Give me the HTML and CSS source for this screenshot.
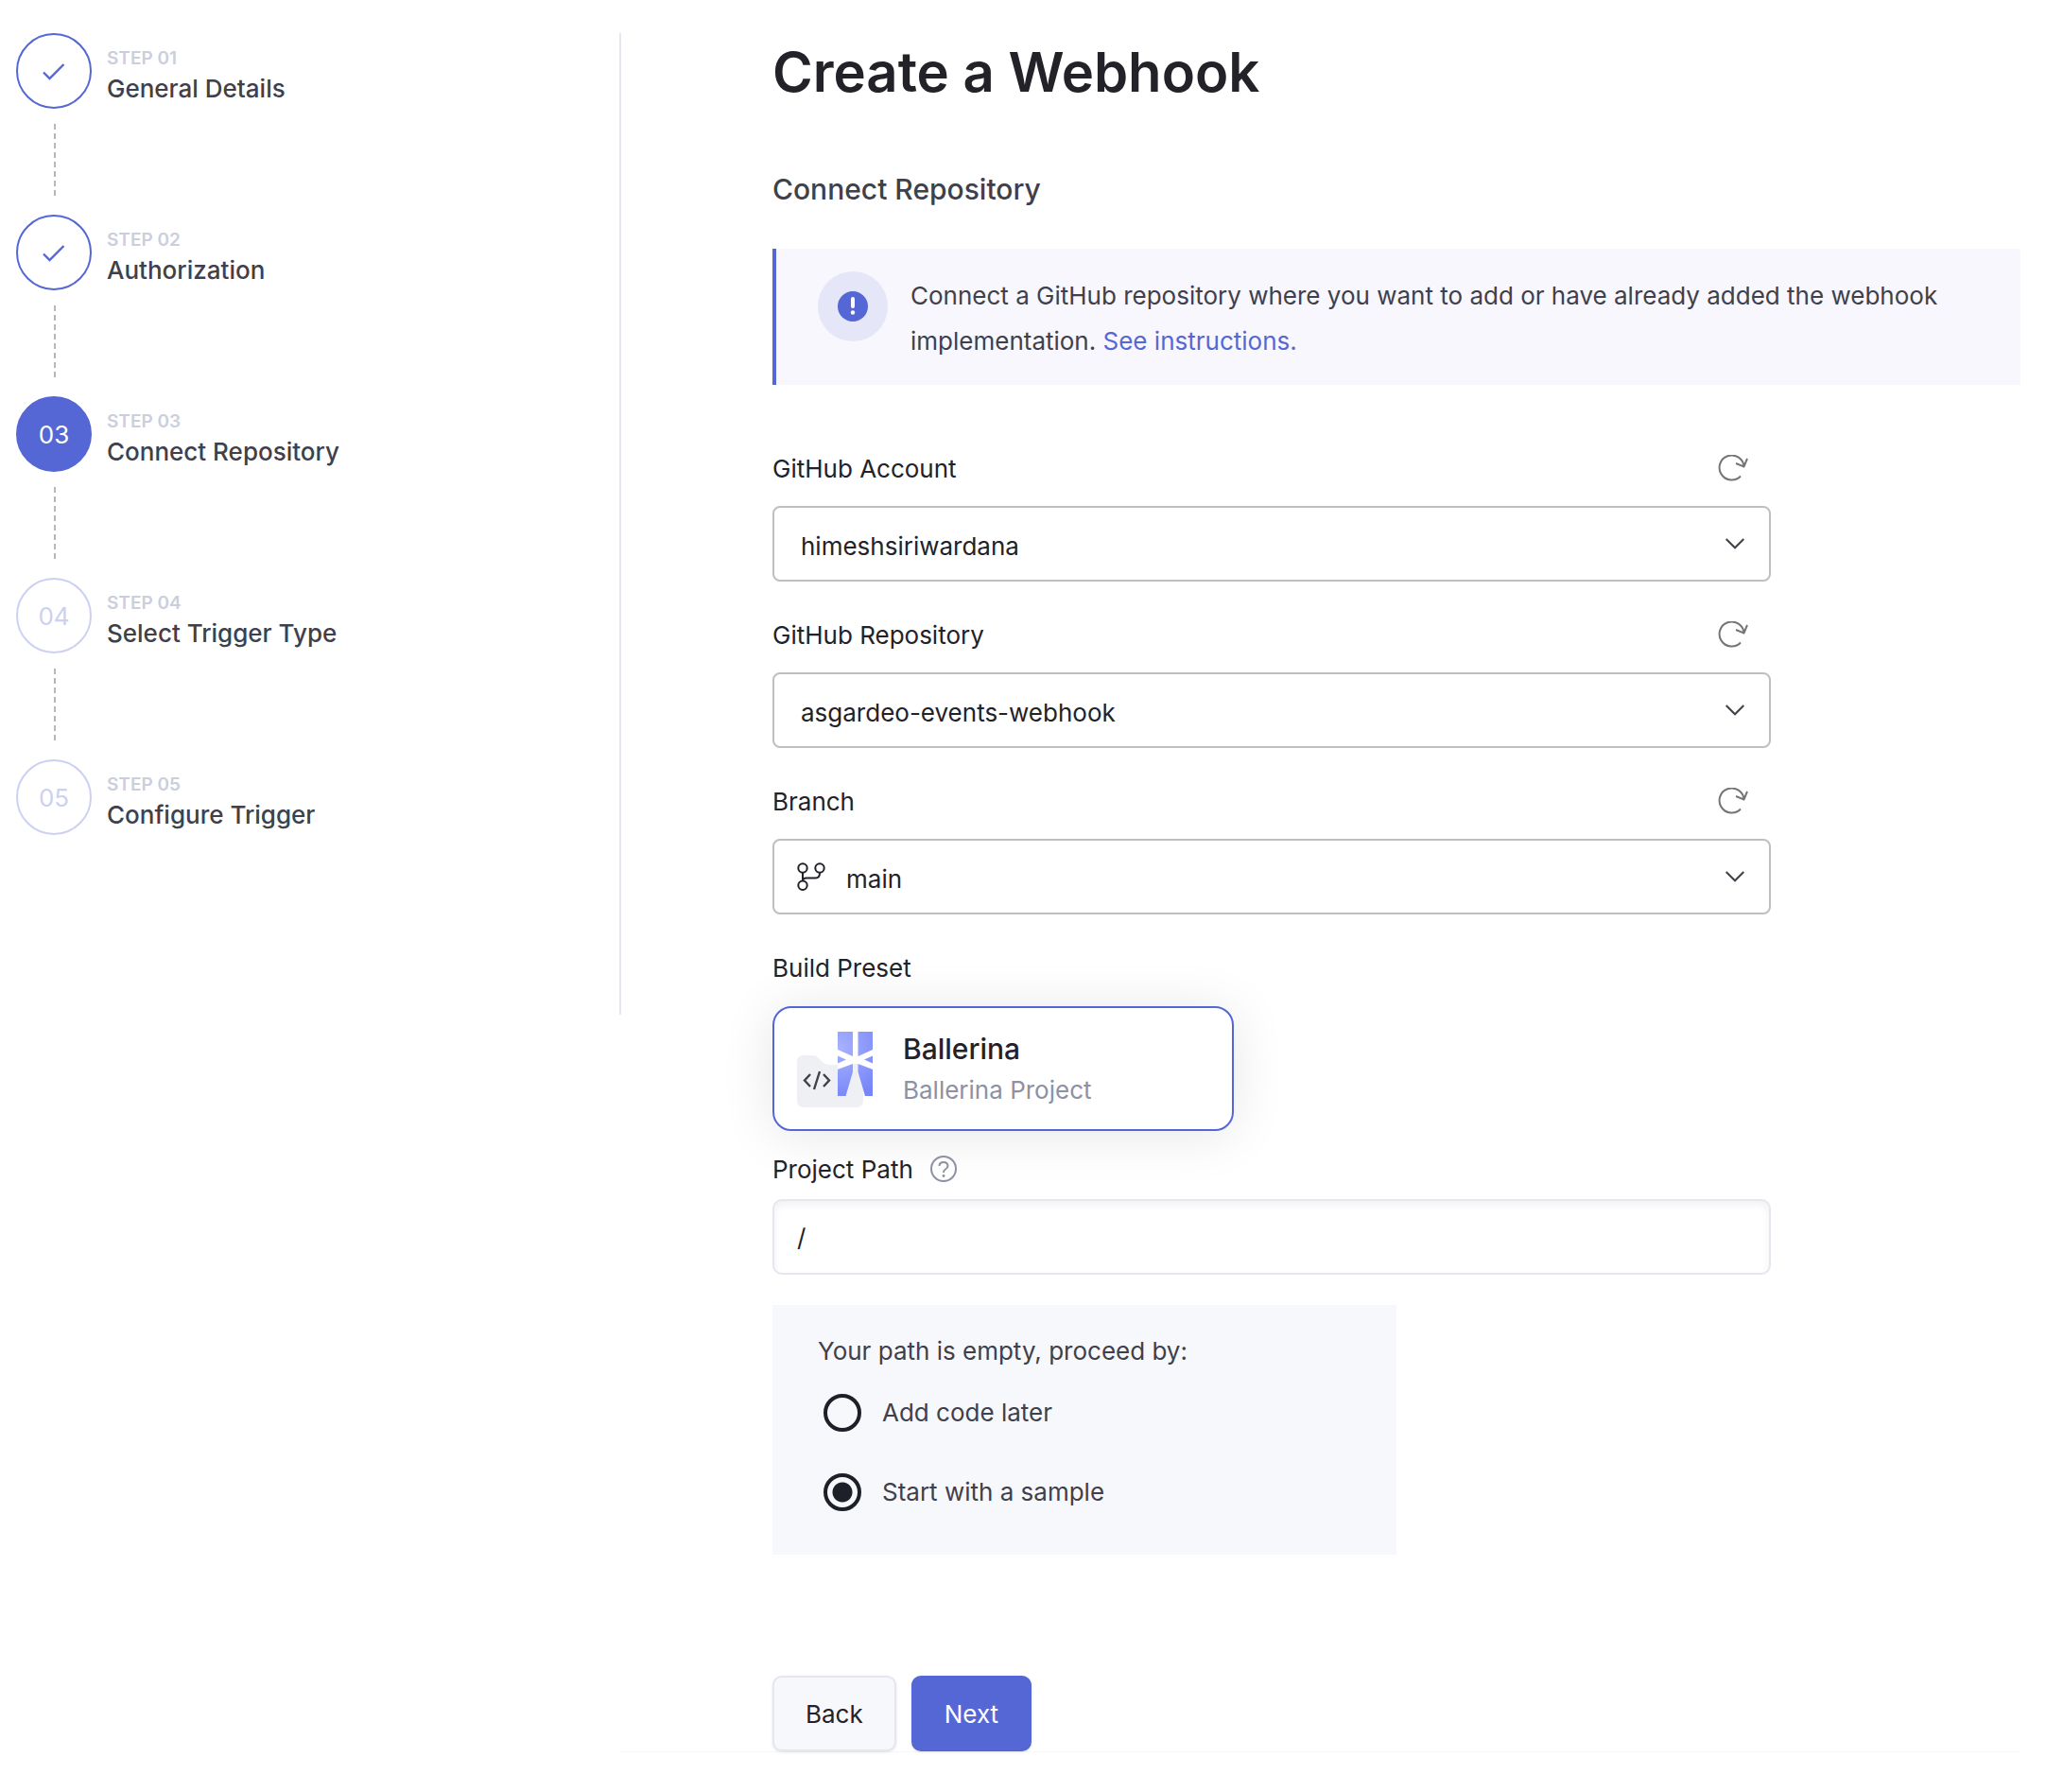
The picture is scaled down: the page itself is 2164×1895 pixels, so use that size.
FILE: index.html
```html
<!DOCTYPE html>
<html lang="en">
<head>
<meta charset="utf-8">
<title>Create a Webhook</title>
<meta name="viewport" content="width=device-width, initial-scale=1">
<link rel="stylesheet" href="styles.css">
</head>
<body>
<svg class="sprite" aria-hidden="true">
  <symbol id="check" viewBox="0 0 24 20"><path d="M1 10.500l6.500 6.500L22.500 2" fill="none" stroke="currentColor" stroke-width="2.4"/></symbol>
  <symbol id="refresh" viewBox="0 0 32 28"><path d="M24 22.500A13 13 0 1 1 27.500 12" fill="none" stroke="currentColor" stroke-width="2"/><path d="M19 9l8.500 3.500L31 4" fill="none" stroke="currentColor" stroke-width="2"/></symbol>
  <symbol id="chevron" viewBox="0 0 20 12"><path d="M.700 1L10 10.300 19.300 1" fill="none" stroke="currentColor" stroke-width="2"/></symbol>
</svg>
<div class="page">
  <aside class="sidebar">
    <ol class="steps">
      <li class="step done">
        <div class="rail"><span class="dot"><svg class="check"><use href="#check"/></svg></span></div>
        <div class="step-text"><span class="step-no">STEP 01</span><span class="step-name">General Details</span></div>
      </li>
      <li class="step done">
        <div class="rail"><span class="dot"><svg class="check"><use href="#check"/></svg></span></div>
        <div class="step-text"><span class="step-no">STEP 02</span><span class="step-name">Authorization</span></div>
      </li>
      <li class="step active" aria-current="step">
        <div class="rail"><span class="dot">03</span></div>
        <div class="step-text"><span class="step-no">STEP 03</span><span class="step-name">Connect Repository</span></div>
      </li>
      <li class="step">
        <div class="rail"><span class="dot">04</span></div>
        <div class="step-text"><span class="step-no">STEP 04</span><span class="step-name">Select Trigger Type</span></div>
      </li>
      <li class="step">
        <div class="rail"><span class="dot">05</span></div>
        <div class="step-text"><span class="step-no">STEP 05</span><span class="step-name">Configure Trigger</span></div>
      </li>
    </ol>
  </aside>
  <main class="content">
    <h1>Create a Webhook</h1>
    <h2>Connect Repository</h2>
    <div class="notice">
      <svg class="notice-icon" viewBox="0 0 74 74" aria-hidden="true"><circle cx="37" cy="37" r="37" fill="#e5e7f8"/><circle cx="37" cy="37" r="16" fill="#5567d5"/><path d="M37 29v8" stroke="#fff" stroke-width="4" stroke-linecap="round"/><circle cx="37" cy="43.500" r="2.200" fill="#fff"/></svg>
      <p>Connect a GitHub repository where you want to add or have already added the webhook implementation. <a href="#instructions">See instructions.</a></p>
    </div>
    <form class="form">
      <div class="field">
        <div class="label-row"><label for="account">GitHub Account</label><button type="button" class="icon-button" aria-label="Refresh accounts"><svg class="refresh"><use href="#refresh"/></svg></button></div>
        <div class="select-box"><select id="account"><option>himeshsiriwardana</option></select><svg class="chevron"><use href="#chevron"/></svg></div>
      </div>
      <div class="field">
        <div class="label-row"><label for="repository">GitHub Repository</label><button type="button" class="icon-button" aria-label="Refresh repositories"><svg class="refresh"><use href="#refresh"/></svg></button></div>
        <div class="select-box"><select id="repository"><option>asgardeo-events-webhook</option></select><svg class="chevron"><use href="#chevron"/></svg></div>
      </div>
      <div class="field">
        <div class="label-row"><label for="branch">Branch</label><button type="button" class="icon-button" aria-label="Refresh branches"><svg class="refresh"><use href="#refresh"/></svg></button></div>
        <div class="select-box with-icon"><svg class="branch" viewBox="0 0 30 30" aria-hidden="true"><g fill="none" stroke="#222228" stroke-width="2"><circle cx="6" cy="6" r="4.700"/><circle cx="24" cy="6" r="4.700"/><circle cx="6" cy="24.300" r="4.700"/><path d="M6 11v8.500M24 11c0 4-1.500 5.500-4.500 5.500H10c-2.500 0-4 1-4 3"/></g></svg><select id="branch"><option>main</option></select><svg class="chevron"><use href="#chevron"/></svg></div>
      </div>
      <div class="preset-label">Build Preset</div>
      <button type="button" class="preset" aria-pressed="true">
        <svg class="preset-icon" viewBox="0 0 80 80" aria-hidden="true">
          <defs><radialGradient id="glow" gradientUnits="userSpaceOnUse" cx="44" cy="18" r="54"><stop offset="0" stop-color="#a9b3ff"/><stop offset="1" stop-color="#7685f8"/></radialGradient></defs>
          <path d="M0 32q0-7 7-7h9q4 0 6 2l5 5q3 3 6 3h30q7 0 7 7v31q0 7-7 7H7q-7 0-7-7z" fill="#eff0f4"/>
          <path d="M59 34l4-3 17 8v29l-8 0-10-25-10 25-9 0V39z" fill="#eff0f4"/>
          <path d="M43 19l16 7h5.500L80 19v20l-15.500-5H59l-16 5z" fill="#fff"/>
          <path d="M43 0h16v26l-16-7zM64.500 0H80v19l-15.500 7zM43 25.500l9 4-9 4zM80 25.500l-9 4 9 4zM43 40l16-6v8.500L51.500 68H43zM80 40l-15.500-6v8.500L72 68h8z" fill="url(#glow)"/>
          <path d="M14 45l-6 6.500 6 6.500M28 45l6 6.500-6 6.500M24 42l-6 19" fill="none" stroke="#40404b" stroke-width="2.400"/>
        </svg>
        <span class="preset-text"><span class="preset-name">Ballerina</span><span class="preset-kind">Ballerina Project</span></span>
      </button>
      <div class="path-row"><label for="path">Project Path</label><svg class="help" viewBox="0 0 28 28" role="img" aria-label="Help"><circle cx="14" cy="14" r="13" fill="none" stroke="#8d91a3" stroke-width="2"/><path d="M9.500 11q.200-4 4.500-4t4.500 4q0 2-2.500 3.500-2 1.200-2 3.500" fill="none" stroke="#8d91a3" stroke-width="2"/><circle cx="14" cy="21.500" r="1.400" fill="#8d91a3"/></svg></div>
      <input class="path-input" id="path" type="text" value="/">
      <fieldset class="choices">
        <legend>Your path is empty, proceed by:</legend>
        <label class="choice"><input type="radio" name="start">Add code later</label>
        <label class="choice"><input type="radio" name="start" checked>Start with a sample</label>
      </fieldset>
      <div class="actions"><button type="button" class="back">Back</button><button type="submit" class="next">Next</button></div>
    </form>
  </main>
</div>
</body>
</html>
```
FILE: styles.css
```css
* { box-sizing: border-box; }
body { margin: 0; background: #fff; color: #222228; font: 400 26px/32px Inter, "Liberation Sans", sans-serif; }
button, input, select { margin: 0; font: inherit; color: inherit; }
svg { display: block; flex: none; }
.sprite { width: 0; height: 0; position: absolute; }

.page { display: flex; align-items: flex-start; padding: 35px 27px 42px 17px; }
.sidebar { flex: 0 1 640px; min-height: 1038px; border-right: 2px solid #e6e6ef; }
.content { flex: 1; min-width: 0; padding-left: 160px; border-bottom: 1px solid #f7f7f7; }

.steps { list-style: none; margin: 0; padding: 0; }
.step { display: flex; gap: 16px; height: 192px; }
.rail { display: flex; flex-direction: column; align-items: center; gap: 16px; width: 80px; }
.dot { display: flex; align-items: center; justify-content: center; width: 80px; height: 80px; padding-top: 2px; border: 2px solid #ccd1f2; border-radius: 50%; color: #ccd1f2; }
.done .dot { border-color: #5567d5; color: #5567d5; }
.active .dot { border-color: #5567d5; background: #5567d5; color: #fff; }
.step:not(:last-child) .rail::after { content: ""; width: 2px; height: 77px; margin-left: 2px; background: repeating-linear-gradient(#b7b7b7 0 6px, transparent 6px 10px); }
.check { width: 24px; height: 20px; }
.step-text { display: flex; flex-direction: column; padding-top: 11px; font-weight: 500; }
.step-no { font-size: 19px; color: #cbcedb; font-weight: 600; }
.step-name { color: #40404b; }

h1 { margin: 0; padding-top: 1px; font-size: 58px; line-height: 80px; font-weight: 600; }
h2 { margin: 64px 0 43px; font-size: 30px; line-height: 40px; font-weight: 500; color: #40404b; }
.notice { display: flex; gap: 24px; padding: 24px 44px 22px; border-left: 4px solid #5567d5; background: #f7f7fd; color: #40404b; }
.notice-icon { width: 74px; height: 74px; }
.notice p { margin: 0; padding-top: 2px; line-height: 48px; }
a { color: #5567d5; text-decoration: none; }

.form { padding-top: 72px; }
.field, .path-input { max-width: 1056px; }
.field { margin-bottom: 40px; }
.label-row { display: flex; align-items: center; justify-content: space-between; height: 32px; margin-bottom: 24px; padding-right: 24px; }
.label-row label, .path-row label { padding-top: 2px; }
.icon-button { padding: 0; border: 0; background: none; color: #757575; }
.refresh { width: 32px; height: 28px; }
.select-box { display: flex; align-items: center; height: 80px; padding: 0 26px 0 28px; border: 2px solid #bfbfbf; border-radius: 8px; }
.with-icon { gap: 22px; padding-left: 24px; }
.select-box select { flex: 1; min-width: 0; height: 76px; padding: 6px 0 0; border: 0; background: none; appearance: none; outline: 0; }
.chevron { width: 20px; height: 12px; color: #40404b; }
.branch { width: 30px; height: 30px; }

.preset-label { padding-top: 1px; margin-bottom: 24px; }
.preset { display: flex; align-items: center; gap: 32px; width: 488px; max-width: 100%; height: 132px; padding: 2px 24px 0; border: 2px solid #5567d5; border-radius: 20px; background: #fff; box-shadow: 0 4px 56px rgba(0, 0, 0, .1); text-align: left; }
.preset-icon { width: 80px; height: 80px; }
.preset-text { display: flex; flex-direction: column; gap: 8px; }
.preset-name { font-size: 30px; line-height: 36px; font-weight: 500; }
.preset-kind { color: #8d91a3; line-height: 36px; }
.path-row { display: flex; align-items: center; gap: 18px; height: 32px; margin: 24px 0 16px; }
.help { width: 28px; height: 28px; }
.path-input { display: block; width: 100%; height: 80px; padding: 0 24px; border: 2px solid #e6e6ef; border-radius: 10px; background: #fff; box-shadow: inset 0 4px 8px rgba(0, 0, 0, .06); outline: 0; }

.choices { display: flex; flex-direction: column; gap: 44px; width: 660px; max-width: 100%; height: 264px; margin: 32px 0 0; padding: 33px 48px; border: 0; background: #f7f8fc; color: #40404b; }
.choices legend { float: left; padding: 0; margin-bottom: -15px; }
.choice { display: flex; align-items: center; gap: 22px; height: 40px; padding-left: 6px; }
.choice input { width: 40px; height: 40px; border: 4px solid #1d2028; border-radius: 50%; appearance: none; }
.choice input:checked { background: radial-gradient(circle, #1d2028 10px, transparent 11px); }

.actions { display: flex; gap: 16px; margin-top: 128px; }
.actions button { height: 80px; border: 2px solid #e6e6ef; border-radius: 10px; padding: 2px 33px 0; background: #f7f8fc; box-shadow: 0 1px 3px rgba(0, 0, 0, .1); }
.actions .next { border-color: #5567d5; background: #5567d5; color: #fff; }
```
